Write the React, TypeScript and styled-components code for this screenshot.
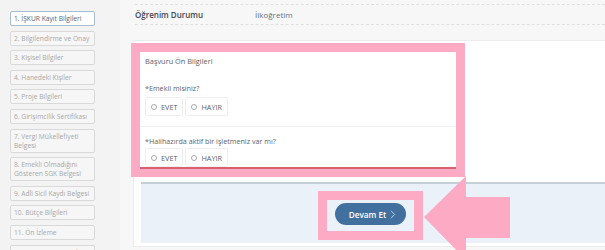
import styled, { createGlobalStyle } from "styled-components";

const STEPS = [
  "1. İŞKUR Kayıt Bilgileri",
  "2. Bilgilendirme ve Onay",
  "3. Kişisel Bilgiler",
  "4. Hanedeki Kişiler",
  "5. Proje Bilgileri",
  "6. Girişimcilik Sertifikası",
  "7. Vergi Mükellefiyeti Belgesi",
  "8. Emekli Olmadığını Gösteren SGK Belgesi",
  "9. Adli Sicil Kaydı Belgesi",
  "10. Bütçe Bilgileri",
  "11. Ön İzleme",
  "12. Başvuru Tamamla",
];

const QUESTIONS = [
  "*Emekli misiniz?",
  "*Halihazırda aktif bir işletmeniz var mı?",
];

const PINK = "#fdaac5";

export default function App() {
  return (
    <>
      <GlobalStyle />
      <Page>
        <Sidebar>
          {STEPS.map((s, i) => (
            <StepButton key={s} $active={i === 0}>
              {s}
            </StepButton>
          ))}
        </Sidebar>
        <Main>
          <InfoCard>
            <InfoRow>
              <InfoLabel>Öğrenim Durumu</InfoLabel>
              <InfoValue>İlkoğretim</InfoValue>
            </InfoRow>
          </InfoCard>
          <FormCard>
            <Highlight>
              <Panel>
                <PanelTitle>Başvuru Ön Bilgileri</PanelTitle>
                {QUESTIONS.map((q, i) => (
                  <Question key={q} $first={i === 0}>
                    <QuestionLabel>{q}</QuestionLabel>
                    <RadioRow>
                      <RadioOption>
                        <Circle />
                        EVET
                      </RadioOption>
                      <RadioOption>
                        <Circle />
                        HAYIR
                      </RadioOption>
                    </RadioRow>
                  </Question>
                ))}
              </Panel>
            </Highlight>
            <Footer>
              <ButtonSpot>
                <ButtonFrame>
                  <NextButton>
                    Devam Et
                    <svg width="6" height="9" viewBox="0 0 6 9">
                      <path
                        d="M1 0.8 L4.6 4.5 L1 8.2"
                        fill="none"
                        stroke="#c9d7e6"
                        strokeWidth="0.9"
                      />
                    </svg>
                  </NextButton>
                </ButtonFrame>
                <Arrow width="88" height="84" viewBox="0 0 88 84">
                  <polygon
                    points="0,41 42,0 42,21 86,21 86,62 42,62 42,84"
                    fill={PINK}
                  />
                </Arrow>
              </ButtonSpot>
            </Footer>
          </FormCard>
        </Main>
      </Page>
    </>
  );
}

/* -------------------------------------------------------------------------- */
/*                                   STYLES                                   */
/* -------------------------------------------------------------------------- */

const GlobalStyle = createGlobalStyle`
  body {
    margin: 0;
    background: #f7f7f7;
    font-family: "Open Sans", "Noto Sans", sans-serif;
  }
`;

const Page = styled.div`
  display: flex;
  width: 605px;
  height: 250px;
  overflow: hidden;
`;

const Sidebar = styled.div`
  width: 120px;
  flex-shrink: 0;
  box-sizing: border-box;
  padding: 11px 0 0 10px;
  background: #f3f3f3;
  display: flex;
  flex-direction: column;
  gap: 4.6px;
`;

const StepButton = styled.div<{ $active?: boolean }>`
  width: 85px;
  box-sizing: border-box;
  padding: 2px 2px 2px 3px;
  border: 1px solid ${(p) => (p.$active ? "#a9bccf" : "#d9d9d9")};
  border-radius: 2px;
  background: ${(p) => (p.$active ? "#ffffff" : "#f6f6f6")};
  color: ${(p) => (p.$active ? "#5a6470" : "#a8a8a8")};
  font-size: 6.7px;
  line-height: 9px;
  flex-shrink: 0;
`;

const Main = styled.div`
  flex: 1;
  padding-left: 13px;
  overflow: hidden;
`;

const InfoCard = styled.div`
  padding: 4px 0 0 2px;
  margin-bottom: 15px;
`;

const InfoRow = styled.div`
  display: flex;
  align-items: center;
  height: 19px;
  border-top: 1px dashed #e0e0e0;
  border-bottom: 1px dashed #e0e0e0;
  font-size: 8px;
`;

const InfoLabel = styled.div`
  width: 120px;
  color: #3f4650;
  font-weight: 600;
`;

const InfoValue = styled.div`
  color: #6a7078;
`;

const FormCard = styled.div`
  margin-right: -10px;
  background: #ffffff;
  border: 1px solid #ececec;
  padding: 2px 0 3px 7px;
`;

const Highlight = styled.div`
  width: 334px;
  box-sizing: border-box;
  margin-left: -10px;
  border: 9px solid ${PINK};
  border-bottom-width: 8px;
`;

const Panel = styled.div`
  background: #ffffff;
  border-bottom: 2px solid #d9606f;
  padding-top: 4px;
`;

const PanelTitle = styled.div`
  padding-left: 5px;
  font-size: 7.4px;
  line-height: 10px;
  color: #59616b;
`;

const Question = styled.div<{ $first?: boolean }>`
  padding: ${(p) => (p.$first ? "17px 0 10px 5px" : "9px 0 0 5px")};
  border-top: ${(p) => (p.$first ? "none" : "1px solid #efefef")};
  display: flex;
  flex-direction: column;
  gap: ${(p) => (p.$first ? "4px" : "2px")};
`;

const QuestionLabel = styled.div`
  font-size: 7.2px;
  line-height: 10px;
  color: #5d6570;
`;

const RadioRow = styled.div`
  display: flex;
  gap: 2px;
`;

const RadioOption = styled.div`
  display: flex;
  align-items: center;
  gap: 4px;
  height: 19px;
  box-sizing: border-box;
  padding: 0 5px 0 5px;
  border: 1px solid #efefef;
  border-radius: 2px;
  font-size: 7.3px;
  color: #5a616b;
`;

const Circle = styled.span`
  width: 4px;
  height: 4px;
  border: 1px solid #a8a8a8;
  border-radius: 50%;
`;

const Footer = styled.div`
  margin-top: 5px;
  background: #eaf1f9;
  border-top: 2px solid #c6cfd8;
  padding: 7px 14px 3px 0;
  display: flex;
  justify-content: center;
`;

const ButtonSpot = styled.div`
  position: relative;
  display: flex;
`;

const ButtonFrame = styled.div`
  border: 9px solid ${PINK};
  padding: 3px 8px 6px;
  display: flex;
`;

const NextButton = styled.button`
  width: 71px;
  height: 22px;
  border: none;
  border-radius: 11px;
  background: #41709f;
  color: #ffffff;
  font-family: "Open Sans", sans-serif;
  font-size: 8.2px;
  font-weight: 600;
  display: flex;
  align-items: center;
  justify-content: center;
  gap: 4px;
  padding: 0 0 0 4px;
`;

const Arrow = styled.svg`
  position: absolute;
  left: 106px;
  top: -15px;
`;
